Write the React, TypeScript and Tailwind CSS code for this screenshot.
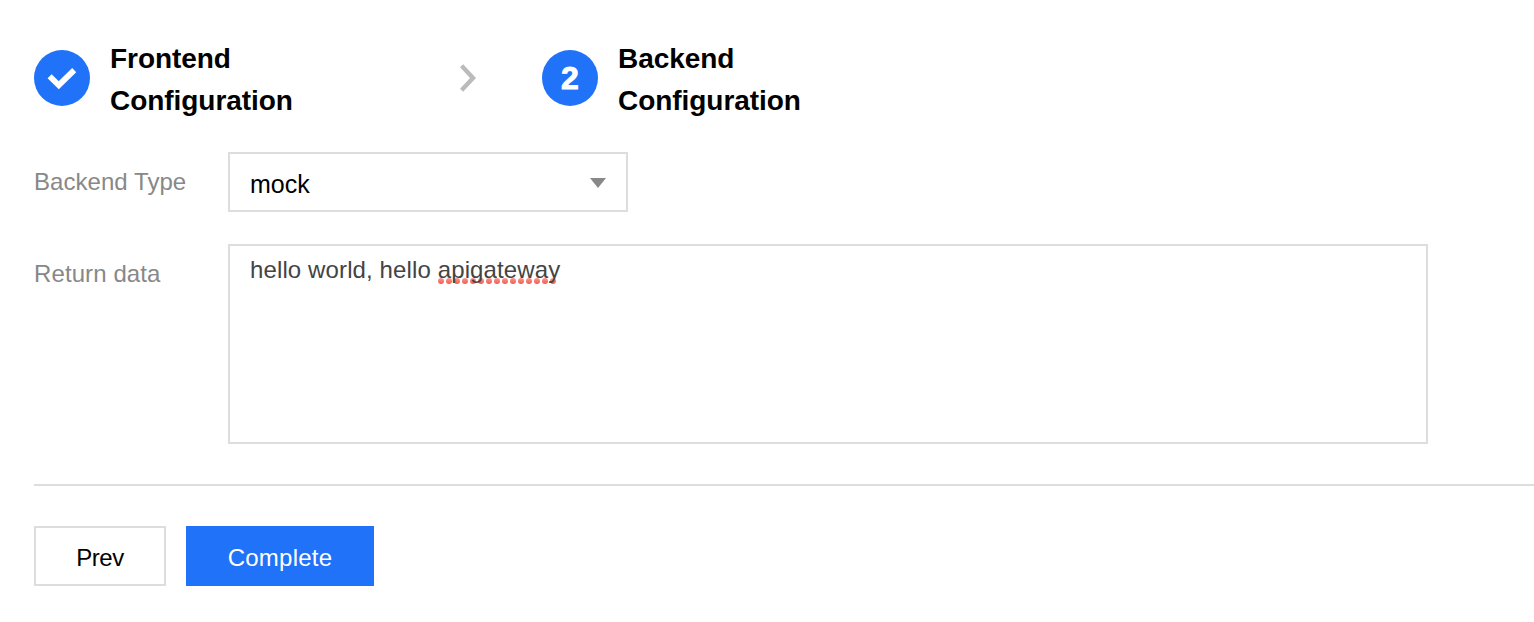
import { useState } from "react";

const steps = [
  { id: 1, lines: ["Frontend", "Configuration"], done: true },
  { id: 2, lines: ["Backend", "Configuration"], done: false },
];

function CheckIcon() {
  return (
    <svg width="56" height="56" viewBox="0 0 56 56" fill="none">
      <path d="M15.6 26.2L24.8 35.2L40.2 20.2" stroke="#fff" strokeWidth="5.8" />
    </svg>
  );
}

// Red dots under a misspelled word
function SpellingMark() {
  return (
    <svg className="absolute left-0 top-[24px] -z-10" width="120" height="6" viewBox="0 0 120 6">
      <defs>
        <linearGradient id="dot" x1="0" y1="0" x2="0" y2="1">
          <stop offset="0" stopColor="#f99b92" />
          <stop offset="1" stopColor="#f05a4c" />
        </linearGradient>
      </defs>
      {Array.from({ length: 15 }, (_, i) => (
        <circle key={i} cx={3 + i * 8} cy="3" r="3" fill="url(#dot)" />
      ))}
    </svg>
  );
}

export default function App() {
  const [backendType] = useState("mock");

  return (
    <div className="h-[622px] overflow-hidden bg-white pl-[34px] pt-[38px] font-['Liberation_Sans',Arial,sans-serif] text-2xl text-black">
      <div className="flex h-[84px]">
        {steps.map((step, index) => (
          <div key={step.id} className="flex">
            {index > 0 && (
              <svg className="ml-[30px] mr-[66px] mt-[26px]" width="16" height="28" viewBox="0 0 16 28" fill="none">
                <path d="M1.6 1.7L13 14L1.6 26.3" stroke="#bbb" strokeWidth="4.4" />
              </svg>
            )}
            <div className="mt-3 flex h-14 w-14 items-center justify-center rounded-full bg-[#2072f8] text-[32px] font-bold text-white">
              {step.done ? <CheckIcon /> : <span className="[-webkit-text-stroke:0.9px_white]">{step.id}</span>}
            </div>
            <div className="ml-5 w-80 text-[28px] font-bold leading-[42px] tracking-[-0.05px]">
              {step.lines.map((line) => (
                <div key={line}>{line}</div>
              ))}
            </div>
          </div>
        ))}
      </div>

      <div className="mt-[30px] flex">
        <div className="w-[194px] leading-[60px] tracking-[0.05px] text-[#888]">Backend Type</div>
        <button className="flex h-[60px] w-[400px] items-center justify-between border-2 border-[#ddd] pl-5 pr-5">
          <span className="mt-1 text-[25px] leading-8">{backendType}</span>
          <svg className="mt-0.5" width="16" height="10" viewBox="0 0 16 10">
            <path d="M0 0H16L8 10Z" fill="#888" />
          </svg>
        </button>
      </div>

      <div className="mt-8 flex">
        <div className="w-[194px] leading-[60px] tracking-[0.1px] text-[#888]">Return data</div>
        <div className="h-[200px] w-[1200px] border-2 border-[#ddd] px-5 pt-2 leading-8 tracking-[0.12px] text-[#444]">
          hello world, hello{" "}
          <span className="relative isolate inline-block">
            apigateway
            <SpellingMark />
          </span>
        </div>
      </div>

      <div className="mt-10 flex gap-5 border-t-2 border-[#ddd] pt-10">
        <button className="h-[60px] w-[132px] border-2 border-[#ddd] pt-1 tracking-[-0.4px]">Prev</button>
        <button className="h-[60px] w-[188px] bg-[#2072f8] pt-1 tracking-[0.25px] text-white">Complete</button>
      </div>
    </div>
  );
}
